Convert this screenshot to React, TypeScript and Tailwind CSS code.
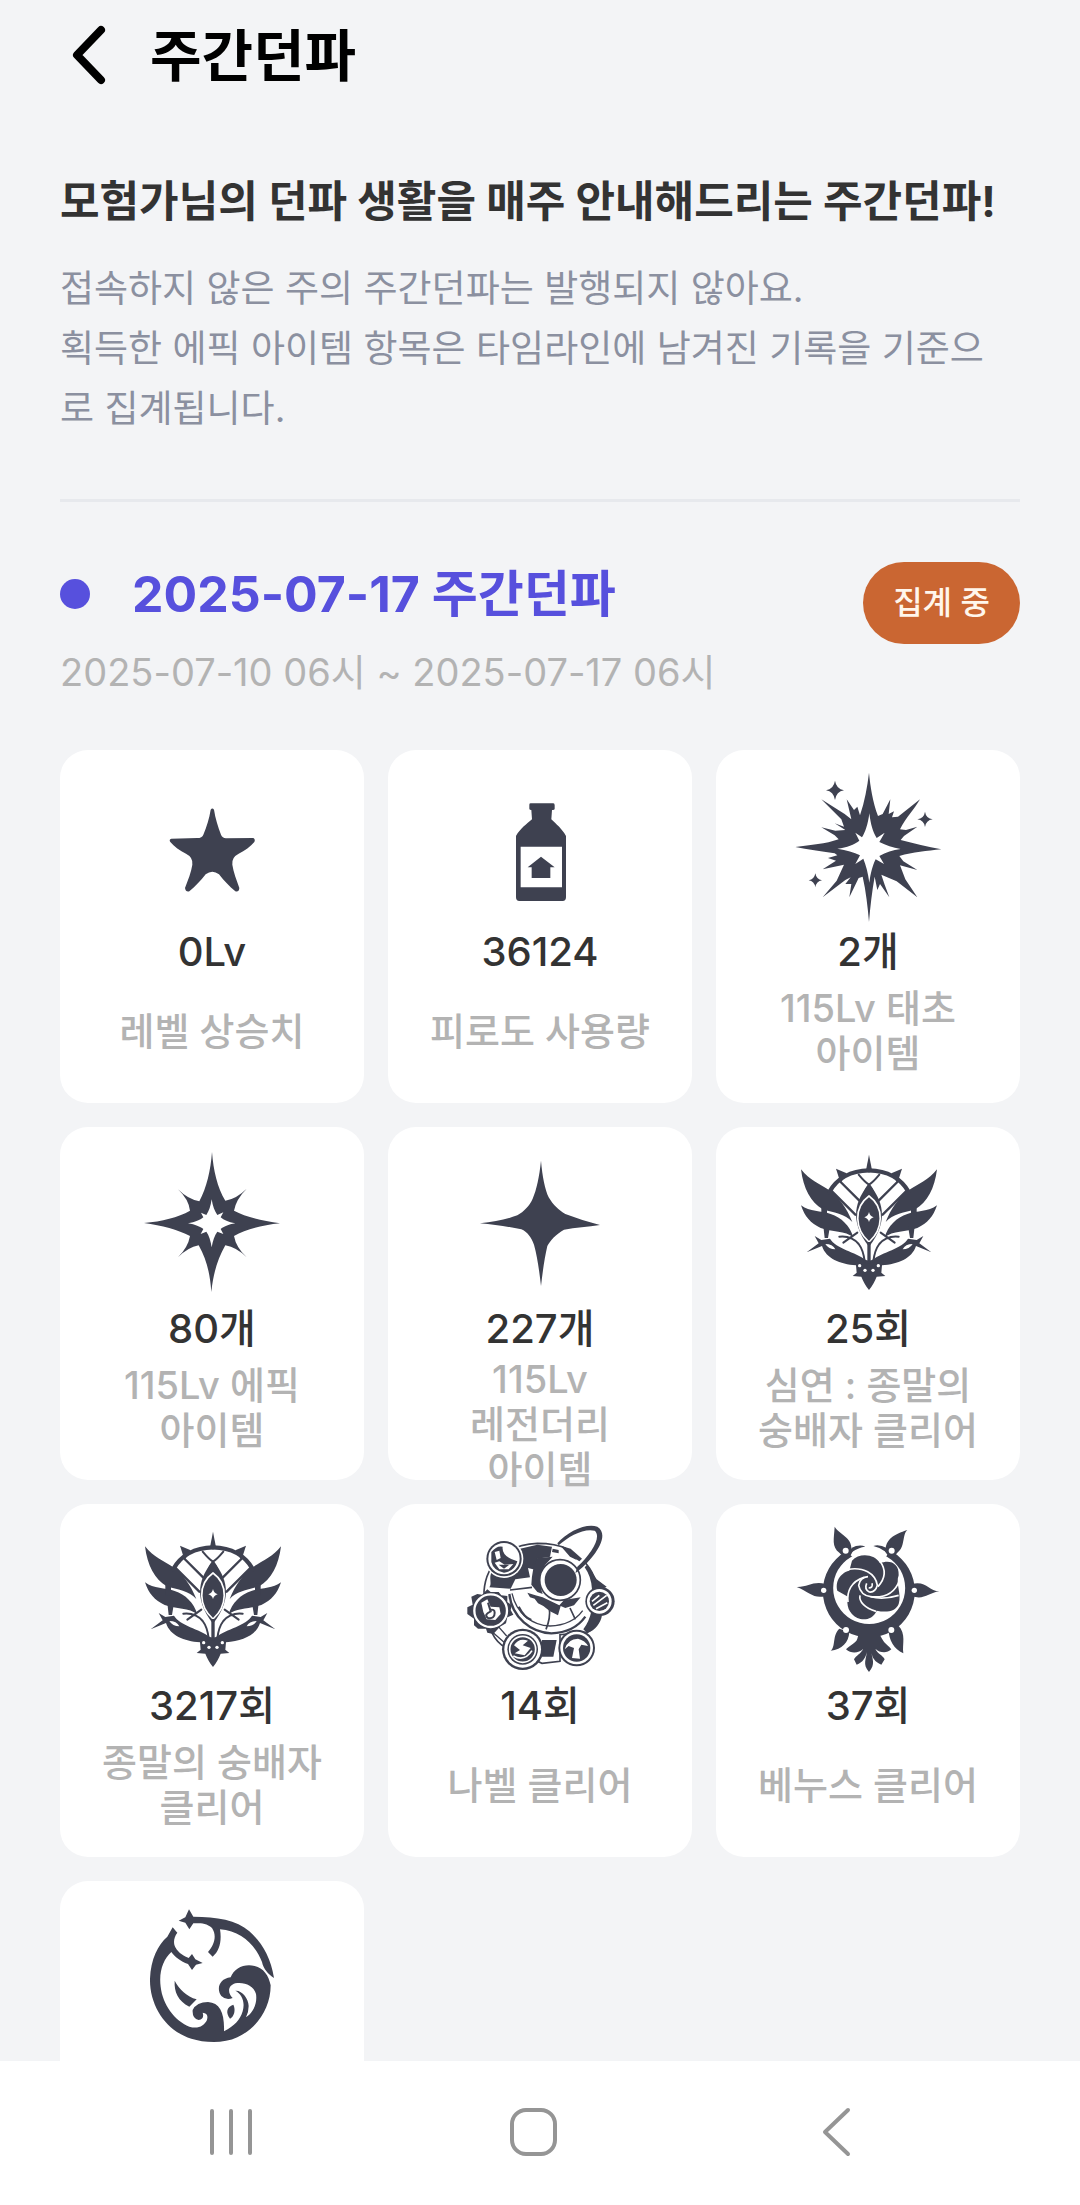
import type { ReactNode } from "react";

interface StatType {
  id: string;
  icon: ReactNode;
  value?: string;
  label?: string;
}

const INK = "#3e4150";

function StarIcon() {
  return (
    <svg viewBox="222 60 468 468" className="size-full" fill={INK}>
      <path d="M452 179Q457 172 462 179C466 205 474 230 483 254Q487 264 498 265L580 264Q587 268 583 276C572 290 554 302 536 311Q514 322 517 344C520 366 530 390 538 414Q537 427 526 424C508 410 492 392 477 373Q457 358 437 373C422 392 406 410 388 424Q377 427 375 414C384 390 394 366 397 344Q400 322 378 311C360 302 342 290 331 276Q326 268 334 266L412 264Q426 264 430 254C440 230 448 205 452 179Z" />
    </svg>
  );
}

function PotionIcon() {
  return (
    <svg viewBox="1206 60 468 468" className="size-full" fill={INK}>
      <path d="M1412 160H1480Q1484 160 1484 166V176Q1484 180 1478 180H1476L1474 208C1488 222 1506 236 1518 258V442Q1518 453 1508 453H1378Q1368 453 1368 442V258C1380 236 1400 222 1416 208L1414 180Q1408 180 1408 176V164Q1408 160 1412 160Z" />
      <path fill="#fff" d="M1382 290H1506V412H1382Z" />
      <path d="M1443 320L1484 352H1471V384H1415V352H1403Z" />
    </svg>
  );
}

function PrimevalIcon() {
  return (
    <svg viewBox="30 60 468 468" className="size-full" fill={INK}>
      <path
        fillRule="evenodd"
        d="M267 68C271 110 278 155 294 198L308 192L331 148L326 192L342 184L336 202L354 200L420 148C402 180 378 202 360 238L378 240L412 230L372 258L362 270C402 280 442 290 484 298C440 303 400 306 358 318L370 334L412 360L360 346L376 388L412 442L350 394L304 374L314 404L328 442L300 402L292 420L284 380C276 424 271 468 267 516C263 470 258 424 248 380L236 384L208 442L214 402L196 402L212 382L196 390L128 442L170 392L192 344L128 358L168 332L144 324L172 316L164 310C120 304 84 298 46 291C94 285 136 282 176 268L164 256L124 232L166 242L196 240L164 220L192 230L184 208L124 148L194 192L214 208L200 148L222 180L232 170L240 196C254 155 262 110 267 68ZM268 190C264 222 256 246 246 262L226 248L238 272C222 284 202 292 172 296C200 301 222 306 240 316L226 342L250 326C258 346 264 368 268 398C272 368 278 346 287 328L312 342L298 318C318 306 338 301 362 297C338 293 318 286 298 276L314 248L290 264C278 246 272 222 268 190Z"
      />
      <path d="M165 92Q169 117 192 121Q169 125 165 150Q161 125 138 121Q161 117 165 92Z" />
      <path d="M435 185Q438 205 458 208Q438 211 435 231Q432 211 412 208Q432 205 435 185Z" />
      <path d="M106 370Q109 388 126 391Q109 394 106 412Q103 394 86 391Q103 388 106 370Z" />
    </svg>
  );
}

function EpicIcon() {
  return (
    <svg viewBox="42 51 468 468" className="size-full" fill={INK}>
      <path
        fillRule="evenodd"
        d="M276 66C280 120 292 174 316 212Q350 206 380 176Q348 208 342 242C376 260 424 272 480 280C424 286 376 298 342 318Q348 352 380 382Q350 352 316 346C292 388 280 430 274 486C270 430 260 388 236 346Q204 352 174 382Q204 352 210 318C174 300 126 286 72 279C126 274 174 262 210 242Q206 208 174 178Q204 208 238 214C260 174 272 120 276 66ZM275 208C272 228 267 244 259 255L243 248L250 262C240 270 226 276 204 280C226 284 240 290 250 297L242 312L259 305C267 316 272 332 275 352C278 332 284 316 292 305L310 312L302 297C312 290 324 284 346 280C324 276 312 270 302 262L310 247L292 255C284 244 278 228 275 208Z"
      />
    </svg>
  );
}

function LegendaryIcon() {
  return (
    <svg viewBox="6 51 468 468" className="size-full" fill={INK}>
      <path d="M243 92C247 140 255 178 266 202C280 226 296 240 316 252C350 264 384 276 420 285C384 290 346 293 312 299C288 312 270 332 262 348C254 382 248 424 243 468C238 424 232 380 222 344C214 322 202 306 184 298C146 290 104 284 60 280C104 276 140 268 172 256C192 244 208 228 218 206C230 178 238 140 243 92Z" />
    </svg>
  );
}

function CrestHalf() {
  return (
    <>
      <path d="M63 88C88 120 120 132 150 152C174 168 202 206 217 246C196 222 160 218 128 208C92 186 70 146 63 88Z" />
      <path d="M63 196C90 216 122 212 152 222C184 232 210 258 220 292C196 272 156 276 122 264C92 250 74 230 63 196Z" />
      <path d="M124 200H141V236H124ZM130 258H150L144 294H134Z" />
      <path d="M104 288L124 300L150 296C168 326 226 336 258 360L267 362V450C256 436 250 424 244 410L218 408L230 398L228 376C180 372 138 356 126 318L80 337L116 310Z" />
      <path fill="#fff" d="M136 312Q158 312 166 328Q146 328 136 312Z" />
      <circle cx="239" cy="377" r="5" fill="#fff" />
      <circle cx="255" cy="391" r="5" fill="#fff" />
      <path d="M168 86L200 100L182 130Z" />
      <g fill="none" stroke={INK} strokeLinecap="round">
        <path strokeWidth="13" d="M148 156C170 116 212 92 267 91" />
        <path strokeWidth="7" d="M182 126L238 182M156 154L226 224" />
        <path strokeWidth="6" d="M236 104Q256 128 267 134Q282 154 288 180" />
        <path strokeWidth="6" d="M232 278L190 308M178 290Q214 286 236 312Q250 330 254 364" />
      </g>
    </>
  );
}

function CrestIcon() {
  return (
    <svg viewBox="30 21 468 468" className="size-full" fill={INK}>
      <CrestHalf />
      <g transform="translate(534 0) scale(-1 1)">
        <CrestHalf />
      </g>
      <path d="M267 44L277 96H257Z" />
      <path d="M267 132C306 178 330 240 267 320C204 240 228 178 267 132Z" />
      <path
        fill="none"
        stroke="#fff"
        strokeWidth="5"
        d="M267 168C314 202 310 268 267 306C224 268 220 202 267 168Z"
      />
      <path fill="#fff" d="M267 216Q270 229 281 232Q270 235 267 246Q264 235 253 232Q264 229 267 216Z" />
      <path d="M262 306H272V370H262Z" />
    </svg>
  );
}

function NabelIcon() {
  return (
    <svg viewBox="36 48 468 468" className="size-full" fill={INK}>
      {/* body */}
      <path
        fill="#fff"
        stroke={INK}
        strokeWidth="5"
        d="M102 250C108 160 180 108 262 106C330 106 384 128 412 172C440 206 446 250 444 300C450 330 438 362 412 372L330 380V460L276 466L156 412C122 388 108 340 102 250Z"
      />
      <path d="M412 170L440 214L470 236L440 252L426 244Q424 206 404 178ZM424 310L456 322C452 346 436 366 412 376L400 364Q418 340 424 310Z" />
      <path d="M118 238C128 224 112 206 130 186L210 122L262 110L306 116L300 146L262 152L258 186L234 180L240 208L196 214L182 242Z" />
      <g fill="none" stroke={INK}>
        <path strokeWidth="4" d="M186 256C200 320 250 352 300 354Q366 352 398 308M420 196Q438 240 428 300" />
        <path strokeWidth="5" d="M180 246L246 238M288 364Q302 330 298 300M360 300L376 334" />
        <path strokeWidth="7" d="M178 258C186 330 244 374 304 376Q372 374 406 326M206 296Q222 328 244 336" />
        <path strokeWidth="4" d="M120 366L164 404M140 350L170 384" />
      </g>
      <path d="M232 254L256 262L278 268L328 292L342 276L392 268L372 292L346 300L332 294L324 322L300 310L280 294L264 286L254 272L240 268Z" />
      <path d="M262 150L308 146L286 170Q260 206 278 258L262 252L244 230Q246 180 262 150Z" />
      <circle cx="330" cy="216" r="61" fill="#fff" stroke={INK} strokeWidth="5" />
      <circle cx="332" cy="216" r="48" />
      <path d="M334 116L366 126L396 152L388 160L360 146ZM308 122L326 126V136L306 132Z" />
      {/* ring on the upper right */}
      <path fill="#fff" d="M328 106C360 72 410 46 440 62C474 90 430 148 380 186C388 158 376 134 328 106Z" />
      <path d="M334 114L362 122L396 152L388 160L360 142Z" />
      <path d="M322 106C352 70 410 44 442 56C486 84 424 160 376 196L382 176C424 138 456 86 434 68C402 60 356 84 326 112Z" />
      {/* upper left globe */}
      <circle cx="162" cy="152" r="58" fill="#fff" />
      <circle cx="162" cy="152" r="53" />
      <circle cx="162" cy="152" r="47" fill="#fff" />
      <path d="M124 132Q140 112 158 116Q154 146 202 160Q194 190 162 194Q130 188 124 162Z" />
      <path fill="#fff" d="M134 132L148 128L152 150L140 156ZM164 116Q160 142 204 154L204 138Q190 118 164 116Z" />
      <path fill="#fff" d="M134 164L148 160L164 170L190 168L176 184H148Z" />
      <path d="M146 170H178L162 182Z" />
      {/* left gear */}
      <path d="M112 244L122 252L146 252L154 262L172 264L172 282L186 292L182 306L190 320L172 328L168 346L150 356L130 378L112 374L108 362L84 362L72 352V332L52 318V298L68 290L64 266L82 258L96 260Z" />
      <circle cx="122" cy="308" r="49" fill="none" stroke="#fff" strokeWidth="7" />
      <path fill="#fff" d="M94 284L112 274L122 296L148 298L152 318L136 336L110 334L100 312Z" />
      <path fill="none" stroke={INK} strokeWidth="6" d="M114 284L122 310Q100 320 114 330Q134 334 134 314Q134 302 120 306" />
      {/* right dial */}
      <circle cx="450" cy="280" r="44" />
      <circle cx="448" cy="280" r="37" fill="#fff" />
      <circle cx="448" cy="280" r="29" />
      <path stroke="#fff" strokeWidth="5" d="M426 280L448 262M430 292L470 262M438 302L472 284" />
      {/* bottom dials */}
      <path fill="#fff" d="M272 384L324 386V404L314 452L276 458Z" />
      <path d="M276 396H320L310 446H276Z" />
      <circle cx="218" cy="424" r="62" />
      <circle cx="218" cy="424" r="55" fill="#fff" />
      <circle cx="218" cy="424" r="46" />
      <circle cx="218" cy="424" r="39" fill="none" stroke="#fff" strokeWidth="5" />
      <path fill="#fff" d="M192 412Q206 388 234 398L218 412L242 420L224 442L194 436L210 426Z" />
      <path fill="none" stroke="#fff" strokeWidth="5" d="M190 444Q224 462 246 428" />
      <circle cx="380" cy="420" r="55" />
      <circle cx="380" cy="420" r="49" fill="#fff" />
      <circle cx="380" cy="420" r="41" />
      <path fill="#fff" d="M344 424Q354 392 384 392Q406 398 414 414L394 410L386 424L390 452L366 450L372 420L356 414Z" />
    </svg>
  );
}

function VenusIcon() {
  return (
    <svg viewBox="30 48 468 468" className="size-full" fill={INK}>
      <path
        fillRule="evenodd"
        d="M267 112A138 138 0 1 1 266 112ZM267 132A108 108 0 1 0 268 132Z"
      />
      <path fill="#fff" d="M232 104L300 104L322 140L312 156Q270 126 226 154L212 142Z" />
      <path d="M214 120Q238 108 256 116Q236 118 216 132ZM320 120Q298 108 280 114Q300 118 318 132Z" />
      {/* thorns round the ring */}
      <path d="M164 56C182 84 222 88 213 134L196 152L178 134C154 116 162 92 164 56Z" />
      <path d="M382 66C366 80 376 118 352 134L336 152L316 132C316 92 342 80 382 66Z" />
      <path d="M50 237C84 238 100 218 136 228V264C102 274 88 252 50 237Z" />
      <path d="M478 250C446 250 440 218 396 228V264C430 278 446 254 478 250Z" />
      <path d="M152 428C168 416 156 382 178 362L208 372C206 404 186 424 152 428Z" />
      <path d="M370 436C366 408 380 378 354 352L326 366C326 394 342 424 370 436Z" />
      <circle cx="197" cy="128" r="9" fill="#fff" />
      <circle cx="335" cy="128" r="9" fill="#fff" />
      <circle cx="131" cy="247" r="8" fill="#fff" />
      <circle cx="403" cy="247" r="8" fill="#fff" />
      <circle cx="198" cy="366" r="9" fill="#fff" />
      <circle cx="334" cy="366" r="9" fill="#fff" />
      {/* rose */}
      <path d="M216 158C238 132 286 138 300 166C330 154 358 166 356 202C346 228 366 258 356 288C346 312 318 314 290 308C278 336 250 338 232 330C206 316 198 292 204 266L172 248C164 214 188 192 208 188Z" />
      <g fill="none" stroke="#fff" strokeWidth="5">
        <path d="M204 184C250 176 286 196 292 232Q286 254 268 252Q252 244 260 226" />
        <path d="M300 160C322 190 312 216 294 236" />
        <path d="M358 218C344 256 312 270 272 266Q242 262 236 232Q240 208 264 206" />
        <path d="M288 310C256 300 236 282 240 262M272 266Q310 276 356 262" />
        <path d="M204 282C200 250 214 220 252 208" />
        <path d="M276 226Q280 240 266 240" />
      </g>
      {/* tail */}
      <path d="M236 378L298 378L306 392C314 408 328 414 334 424C320 438 298 434 286 422C294 440 308 440 314 454L304 470C284 462 276 448 274 432C276 452 288 468 267 492C246 468 260 452 260 432C258 448 248 464 230 470L222 454C228 442 242 438 250 422C236 436 214 438 198 424C208 412 228 406 232 392Z" />
    </svg>
  );
}

function WaveIcon() {
  return (
    <svg viewBox="42 39 468 468" className="size-full" fill={INK}>
      {/* left arc and the sea */}
      <path d="M158 118L172 134C160 150 160 166 166 178C176 196 194 206 206 210L216 198L226 214L248 225L228 230L216 246L204 228C182 220 164 206 154 192C130 214 116 250 122 296C128 350 164 398 208 416C236 424 252 412 260 398Q268 376 248 374Q254 392 236 396Q216 392 218 366Q230 342 264 342C300 344 314 376 312 430C344 414 360 396 368 370C376 342 366 318 346 308C366 306 386 332 386 354Q386 372 378 388C402 372 412 344 408 318C400 292 374 282 346 286C326 292 320 312 338 330Q318 338 304 324C288 302 298 272 332 268C342 240 374 226 404 234C430 240 446 262 452 292C452 360 412 420 352 448C310 468 252 464 214 452C140 430 88 354 90 272C92 214 114 170 142 146Z" />
      {/* upper arc */}
      <path d="M176 98L196 88L207 64L220 86C290 86 350 96 388 130C424 162 452 206 462 270C444 258 430 242 426 222C406 172 364 128 300 124C306 160 298 190 278 206L264 192C282 172 292 144 276 120C258 104 238 106 220 106L208 124L196 104Z" />
      <path d="M164 278C178 304 200 326 230 334L208 356C174 338 162 312 164 278Z" />
      <path d="M340 350C348 366 342 386 330 392C316 374 320 356 340 350Z" />
    </svg>
  );
}

const stats: StatType[] = [
  { id: "level", icon: <StarIcon />, value: "0Lv", label: "레벨 상승치" },
  { id: "fatigue", icon: <PotionIcon />, value: "36124", label: "피로도 사용량" },
  { id: "primeval", icon: <PrimevalIcon />, value: "2개", label: "115Lv 태초 아이템" },
  { id: "epic", icon: <EpicIcon />, value: "80개", label: "115Lv 에픽 아이템" },
  { id: "legendary", icon: <LegendaryIcon />, value: "227개", label: "115Lv 레전더리 아이템" },
  { id: "abyss", icon: <CrestIcon />, value: "25회", label: "심연 : 종말의 숭배자 클리어" },
  { id: "apocalypse", icon: <CrestIcon />, value: "3217회", label: "종말의 숭배자 클리어" },
  { id: "nabel", icon: <NabelIcon />, value: "14회", label: "나벨 클리어" },
  { id: "venus", icon: <VenusIcon />, value: "37회", label: "베누스 클리어" },
  { id: "wave", icon: <WaveIcon /> },
];

function StatCard({ stat }: { stat: StatType }) {
  return (
    <li className="flex h-[353px] flex-col items-center rounded-[28px] bg-white px-8 pt-5">
      <div className="size-[156px] shrink-0">{stat.icon}</div>
      <p className="text-[40px] leading-[52px] font-medium text-[#333333]">{stat.value}</p>
      <div className="mt-0.5 flex min-h-[102px] shrink-0 items-center">
        <p className="text-center text-[38px] leading-[45px] font-medium break-keep text-[#b3b3b3]">
          {stat.label}
        </p>
      </div>
    </li>
  );
}

export default function App() {
  return (
    <div className="flex h-screen flex-col bg-[#f3f4f6] font-['Inter','Noto_Sans_CJK_KR',sans-serif]">
      <main className="min-h-0 flex-1 overflow-y-auto px-[60px] [scrollbar-width:none]">
        <header className="flex h-28 items-center">
          <button type="button" aria-label="뒤로" className="-ml-1 flex h-16 w-[94px] items-center pl-4">
            <svg viewBox="0 0 36 64" className="h-16 w-9" fill="none" stroke="#000">
              <path d="M29 6L5 31L29 56" strokeWidth="8" strokeLinecap="round" strokeLinejoin="round" />
            </svg>
          </button>
          <h1 className="text-[56px] leading-[64px] font-bold text-black">주간던파</h1>
        </header>

        <section className="mt-[59px] border-b-3 border-[#e7e9ed] pb-[60px]">
          <h2 className="text-[43px] leading-[60px] font-bold whitespace-nowrap text-[#333333]">
            모험가님의 던파 생활을 매주 안내해드리는 주간던파!
          </h2>
          <p className="mt-7 pr-2 text-[37px] leading-[60px] text-[#8b90a0]">
            접속하지 않은 주의 주간던파는 발행되지 않아요.
            <br />
            획득한 에픽 아이템 항목은 타임라인에 남겨진 기록을 기준으로 집계됩니다.
          </p>
        </section>

        <section className="pt-[60px]">
          <div className="flex items-start justify-between">
            <div>
              <div className="flex items-center gap-[42px]">
                <span className="size-[30px] rounded-full bg-[#5750dd]" />
                <h3 className="text-[50px] leading-[64px] font-bold text-[#5750dd]">
                  2025-07-17 주간던파
                </h3>
              </div>
              <p className="mt-4 text-[38px] leading-[60px] text-[#b3b3b3]">
                2025-07-10 06시 ~ 2025-07-17 06시
              </p>
            </div>
            <span className="flex h-[82px] items-center rounded-full bg-[#ca6632] px-[30px] text-[32px] font-medium text-[#fff6ec]">
              집계 중
            </span>
          </div>

          <ul className="mt-12 grid grid-cols-3 gap-6">
            {stats.map((stat) => (
              <StatCard key={stat.id} stat={stat} />
            ))}
          </ul>
        </section>
      </main>

      <nav className="grid h-36 shrink-0 grid-cols-3 bg-white pr-[92px] pl-20">
        <button type="button" aria-label="최근 앱" className="flex items-center justify-center">
          <svg viewBox="0 0 48 52" className="h-[52px] w-12" stroke="#959595" strokeWidth="4" strokeLinecap="round">
            <path d="M5 4V46M24 4V46M43 4V46" />
          </svg>
        </button>
        <button type="button" aria-label="홈" className="flex items-center justify-center">
          <svg viewBox="0 0 52 52" className="size-[52px]" fill="none" stroke="#959595" strokeWidth="4">
            <rect x="4" y="3" width="43" height="44" rx="14" />
          </svg>
        </button>
        <button type="button" aria-label="이전" className="flex items-center justify-center">
          <svg viewBox="0 0 32 52" className="h-[52px] w-8" fill="none" stroke="#959595" strokeWidth="4">
            <path d="M27 3L4 25L27 47" strokeLinecap="round" strokeLinejoin="round" />
          </svg>
        </button>
      </nav>
    </div>
  );
}
